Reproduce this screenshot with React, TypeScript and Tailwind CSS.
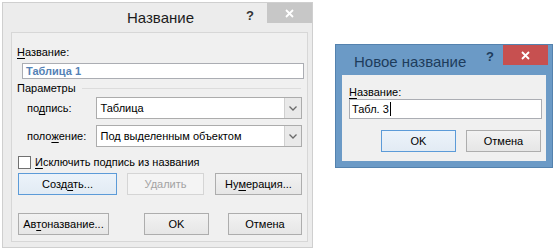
import React from 'react';

const font = { fontFamily: '"Liberation Sans", Arial, sans-serif' };

const Btn: React.FC<{ w: string; focused?: boolean; disabled?: boolean; children: React.ReactNode }> = ({ w, focused, disabled, children }) => (
  <div
    className={`${w} h-[22px] flex items-center justify-center text-[11px] border ${
      disabled
        ? 'border-[#d5d5d5] bg-[#f4f4f4] text-[#a3a3a3]'
        : focused
        ? 'border-[#5c9bd8] bg-gradient-to-b from-[#ecf3fa] to-[#e2ebf4] text-black'
        : 'border-[#adadad] bg-gradient-to-b from-[#f2f2f2] to-[#e6e6e6] text-black'
    }`}
  >
    {children}
  </div>
);

const Combo: React.FC<{ value: string }> = ({ value }) => (
  <div className="w-[208px] h-[22px] flex bg-white border border-[#acacac]">
    <div className="flex-1 flex items-center pl-[4px] text-[11px] text-black">{value}</div>
    <div className="w-[17px] h-full flex items-center justify-center bg-[#e9e9e9] border-l border-[#d0d0d0]">
      <svg width="8" height="5" viewBox="0 0 8 5">
        <path d="M0.5 0.5 L4 4 L7.5 0.5" fill="none" stroke="#6a6a6a" strokeWidth="1.3" />
      </svg>
    </div>
  </div>
);

const U: React.FC<{ children: React.ReactNode }> = ({ children }) => (
  <span className="underline underline-offset-2">{children}</span>
);

export default function App() {
  return (
    <div className="relative w-[558px] h-[252px] bg-white overflow-hidden" style={font}>
      {/* Окно «Название» */}
      <div className="absolute left-[2px] top-[2px] w-[311px] h-[246px] bg-[#ececec] border border-[#cfcfcf] flex flex-col">
        <div className="relative h-[29px] flex items-center justify-center">
          <span className="text-[15px] text-[#1c1c1c] pl-[6px] pt-[2px]">Название</span>
          <span className="absolute right-[58px] top-[3px] text-[13px] font-bold text-[#333]">?</span>
          <div className="absolute right-0 top-0 w-[45px] h-[20px] bg-[#c7c7c7] flex items-center justify-center">
            <svg width="9" height="9" viewBox="0 0 9 9">
              <path d="M1 1 L8 8 M8 1 L1 8" stroke="#ffffff" strokeWidth="1.8" />
            </svg>
          </div>
        </div>
        <div className="ml-[8px] mr-[4px] h-[210px] bg-[#f0f0f0] border border-[#d7d7d7] flex flex-col px-[5px] text-[11px] text-black">
          <div className="mt-[12px] h-[15px] leading-[15px]">
            <U>Н</U>азвание:
          </div>
          <div className="ml-[5px] mt-[3px] w-[282px] h-[16px] bg-white border border-[#abadb3] flex items-center pl-[3px] font-bold text-[#5482b6]">
            Таблица 1
          </div>
          <div className="mt-[2px] h-[15px] leading-[15px] flex items-center">
            <span>Параметры</span>
            <div className="flex-1 h-px bg-[#dcdcdc] ml-[6px] mr-[1px]" />
          </div>
          <div className="mt-[1px] flex items-center">
            <div className="w-[79px] pl-[10px]">
              по<U>д</U>пись:
            </div>
            <Combo value="Таблица" />
          </div>
          <div className="mt-[6px] flex items-center">
            <div className="w-[79px] pl-[10px]">
              поло<U>ж</U>ение:
            </div>
            <Combo value="Под выделенным объектом" />
          </div>
          <div className="mt-[9px] ml-[1px] flex items-center h-[13px]">
            <div className="w-[13px] h-[13px] bg-white border border-[#707070]" />
            <span className="ml-[4px]">
              <U>И</U>сключить подпись из названия
            </span>
          </div>
          <div className="mt-[4px] ml-[1px] flex">
            <Btn w="w-[100px]" focused>
              <span>
                Созд<U>а</U>ть...
              </span>
            </Btn>
            <div className="ml-[10px]">
              <Btn w="w-[77px]" disabled>
                Удалить
              </Btn>
            </div>
            <div className="ml-[11px]">
              <Btn w="w-[87px]">
                <span>
                  Ну<U>м</U>ерация...
                </span>
              </Btn>
            </div>
          </div>
          <div className="mt-[18px] ml-[1px] flex">
            <Btn w="w-[92px]">
              <span>
                Ав<U>т</U>оназвание...
              </span>
            </Btn>
            <div className="ml-[35px]">
              <Btn w="w-[65px]">OK</Btn>
            </div>
            <div className="ml-[19px]">
              <Btn w="w-[74px]">Отмена</Btn>
            </div>
          </div>
        </div>
      </div>

      {/* Окно «Новое название» */}
      <div className="absolute left-[335px] top-[44px] w-[218px] h-[124px] bg-[#6b9ac6] border border-[#5482ae] flex flex-col">
        <div className="relative h-[30px] flex items-center pl-[18px] pt-[4px]">
          <span className="text-[15px] text-[#1d3c5c]">Новое название</span>
          <span className="absolute right-[58px] top-[2px] text-[13px] font-bold text-[#1d3c5c]">?</span>
          <div className="absolute right-[4px] top-0 w-[45px] h-[20px] bg-[#c75050] flex items-center justify-center">
            <svg width="9" height="9" viewBox="0 0 9 9">
              <path d="M1 1 L8 8 M8 1 L1 8" stroke="#ffffff" strokeWidth="1.8" />
            </svg>
          </div>
        </div>
        <div className="mx-[6px] h-[86px] bg-[#f0f0f0] flex flex-col pl-[7px] pr-[5px] text-[11px] text-black">
          <div className="mt-[10px] h-[14px] leading-[14px]">
            <U>Н</U>азвание:
          </div>
          <div className="w-[193px] h-[20px] bg-white border border-[#abadb3] flex items-center pl-[2px]">
            <span>Табл. 3</span>
            <span className="w-px h-[14px] bg-black ml-[1px]" />
          </div>
          <div className="mt-[11px] flex justify-end gap-[10px]">
            <Btn w="w-[75px]" focused>
              OK
            </Btn>
            <Btn w="w-[75px]">Отмена</Btn>
          </div>
        </div>
      </div>
    </div>
  );
}
